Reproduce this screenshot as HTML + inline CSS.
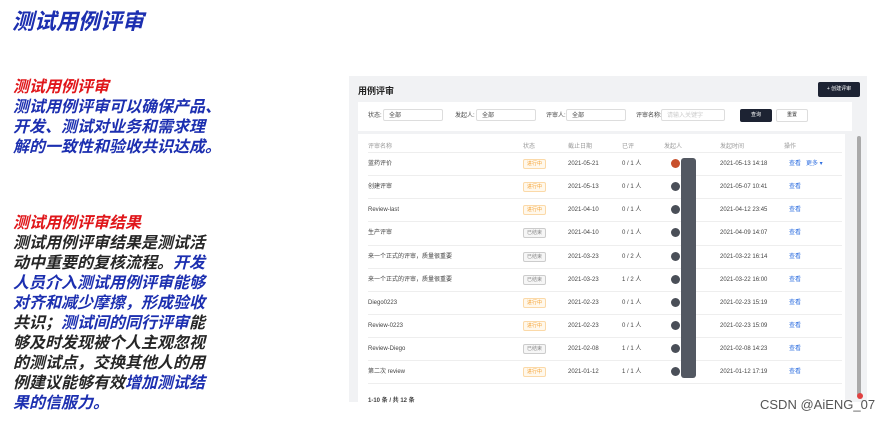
<!DOCTYPE html>
<html><head><meta charset="utf-8"><style>
*{margin:0;padding:0;box-sizing:border-box}
body{width:891px;height:422px;background:#fff;position:relative;overflow:hidden;font-family:"Liberation Sans","Noto Sans CJK SC",sans-serif}
.a{position:absolute;white-space:nowrap}
.t{font-weight:bold;font-style:italic;color:#1c2fb0;font-size:16px;line-height:20px}
.r{color:#e0161a}
.k{color:#262626}
.s{font-size:6px;color:#444;line-height:8px}
.g{font-size:6px;color:#999;line-height:8px}
.tag{position:absolute;font-size:5px;line-height:6px;padding:1px 3px;border:1px solid;border-radius:2px}
.o{color:#f5a030;border-color:#fbd9a8;background:#fff8ec}
.e{color:#888;border-color:#ccc;background:#f6f6f6}
.av{position:absolute;width:9px;height:9px;border-radius:50%;background:#4a4f58}
.l{position:absolute;left:368px;width:474px;height:1px;background:#eeeeee}
.b{font-size:6px;color:#2f6fe0;line-height:8px}
.sel{position:absolute;height:12px;border:1px solid #ddd;background:#fff;border-radius:2px}
</style></head><body>
<div class="a t" style="left:12px;top:8px;font-size:22px;line-height:28px">测试用例评审</div>
<div class="a t r" style="left:13px;top:78px">测试用例评审</div>
<div class="a t" style="left:13px;top:98px">测试用例评审可以确保产品、</div>
<div class="a t" style="left:13px;top:118px">开发、测试对业务和需求理</div>
<div class="a t" style="left:13px;top:138px">解的一致性和验收共识达成。</div>
<div class="a t r" style="left:13px;top:214px">测试用例评审结果</div>
<div class="a t k" style="left:13px;top:234px">测试用例评审结果是测试活</div>
<div class="a t" style="left:13px;top:254px"><span class="k">动中重要的复核流程。</span>开发</div>
<div class="a t" style="left:13px;top:274px">人员介入测试用例评审能够</div>
<div class="a t" style="left:13px;top:294px">对齐和减少摩擦，形成验收</div>
<div class="a t" style="left:13px;top:314px"><span class="k">共识；</span>测试间的同行评审<span class="k">能</span></div>
<div class="a t k" style="left:13px;top:334px">够及时发现被个人主观忽视</div>
<div class="a t k" style="left:13px;top:354px">的测试点，交换其他人的用</div>
<div class="a t" style="left:13px;top:374px"><span class="k">例建议能够有效</span>增加测试结</div>
<div class="a t" style="left:13px;top:394px">果的信服力。</div>

<div class="a" style="left:349px;top:76px;width:518px;height:326px;background:#f1f2f4"></div>
<div class="a" style="left:358px;top:84px;font-size:9px;font-weight:bold;color:#222">用例评审</div>
<div class="a" style="left:818px;top:82px;width:42px;height:15px;background:#1d2333;border-radius:2px;color:#fff;font-size:5px;line-height:15px;text-align:center">+ 创建评审</div>
<div class="a" style="left:358px;top:102px;width:494px;height:29px;background:#fff"></div>
<div class="a s" style="left:368px;top:112px">状态:</div><div class="sel" style="left:383px;top:109px;width:60px"></div><div class="a s" style="left:389px;top:112px">全部</div>
<div class="a s" style="left:455px;top:112px">发起人:</div><div class="sel" style="left:476px;top:109px;width:60px"></div><div class="a s" style="left:482px;top:112px">全部</div>
<div class="a s" style="left:546px;top:112px">评审人:</div><div class="sel" style="left:566px;top:109px;width:60px"></div><div class="a s" style="left:572px;top:112px">全部</div>
<div class="a s" style="left:636px;top:112px">评审名称:</div><div class="sel" style="left:661px;top:109px;width:64px"></div><div class="a g" style="left:667px;top:112px;color:#ccc">请输入关键字</div>
<div class="a" style="left:740px;top:109px;width:32px;height:13px;background:#1d2333;border-radius:2px;color:#fff;font-size:5px;line-height:13px;text-align:center">查询</div>
<div class="a" style="left:776px;top:109px;width:32px;height:13px;border:1px solid #ddd;background:#fff;border-radius:2px;font-size:5px;line-height:11px;text-align:center;color:#333">重置</div>
<div class="a" style="left:358px;top:134px;width:487px;height:268px;background:#fff"></div>
<div class="a" style="left:857px;top:136px;width:4px;height:260px;background:#aaa;border-radius:2px"></div>
<div class="a" style="left:857px;top:393px;width:6px;height:6px;background:#e04040;border-radius:50%"></div>
<div class="a g" style="left:368px;top:143px">评审名称</div><div class="a g" style="left:523px;top:143px">状态</div><div class="a g" style="left:568px;top:143px">截止日期</div><div class="a g" style="left:622px;top:143px">已评</div><div class="a g" style="left:664px;top:143px">发起人</div><div class="a g" style="left:720px;top:143px">发起时间</div><div class="a g" style="left:784px;top:143px">操作</div>

<div class="l" style="top:152px"></div>
<div class="a s" style="left:368px;top:160px">蓝药评价</div><div class="tag o" style="left:523px;top:159px">进行中</div><div class="a s" style="left:568px;top:160px">2021-05-21</div><div class="a s" style="left:622px;top:160px">0 / 1 人</div><div class="av" style="left:671px;top:159px;background:#c8502c"></div><div class="a s" style="left:720px;top:160px">2021-05-13 14:18</div><div class="a b" style="left:789px;top:160px">查看</div><div class="a b" style="left:806px;top:160px">更多 ▾</div>
<div class="l" style="top:175px"></div>
<div class="a s" style="left:368px;top:183px">创建评审</div><div class="tag o" style="left:523px;top:182px">进行中</div><div class="a s" style="left:568px;top:183px">2021-05-13</div><div class="a s" style="left:622px;top:183px">0 / 1 人</div><div class="av" style="left:671px;top:182px"></div><div class="a s" style="left:720px;top:183px">2021-05-07 10:41</div><div class="a b" style="left:789px;top:183px">查看</div>
<div class="l" style="top:198px"></div>
<div class="a s" style="left:368px;top:206px">Review-last</div><div class="tag o" style="left:523px;top:205px">进行中</div><div class="a s" style="left:568px;top:206px">2021-04-10</div><div class="a s" style="left:622px;top:206px">0 / 1 人</div><div class="av" style="left:671px;top:205px"></div><div class="a s" style="left:720px;top:206px">2021-04-12 23:45</div><div class="a b" style="left:789px;top:206px">查看</div>
<div class="l" style="top:221px"></div>
<div class="a s" style="left:368px;top:229px">生产评审</div><div class="tag e" style="left:523px;top:228px">已结束</div><div class="a s" style="left:568px;top:229px">2021-04-10</div><div class="a s" style="left:622px;top:229px">0 / 1 人</div><div class="av" style="left:671px;top:228px"></div><div class="a s" style="left:720px;top:229px">2021-04-09 14:07</div><div class="a b" style="left:789px;top:229px">查看</div>
<div class="l" style="top:245px"></div>
<div class="a s" style="left:368px;top:253px">来一个正式的评审，质量很重要</div><div class="tag e" style="left:523px;top:252px">已结束</div><div class="a s" style="left:568px;top:253px">2021-03-23</div><div class="a s" style="left:622px;top:253px">0 / 2 人</div><div class="av" style="left:671px;top:252px"></div><div class="a s" style="left:720px;top:253px">2021-03-22 16:14</div><div class="a b" style="left:789px;top:253px">查看</div>
<div class="l" style="top:268px"></div>
<div class="a s" style="left:368px;top:276px">来一个正式的评审，质量很重要</div><div class="tag e" style="left:523px;top:275px">已结束</div><div class="a s" style="left:568px;top:276px">2021-03-23</div><div class="a s" style="left:622px;top:276px">1 / 2 人</div><div class="av" style="left:671px;top:275px"></div><div class="a s" style="left:720px;top:276px">2021-03-22 16:00</div><div class="a b" style="left:789px;top:276px">查看</div>
<div class="l" style="top:291px"></div>
<div class="a s" style="left:368px;top:299px">Diego0223</div><div class="tag o" style="left:523px;top:298px">进行中</div><div class="a s" style="left:568px;top:299px">2021-02-23</div><div class="a s" style="left:622px;top:299px">0 / 1 人</div><div class="av" style="left:671px;top:298px"></div><div class="a s" style="left:720px;top:299px">2021-02-23 15:19</div><div class="a b" style="left:789px;top:299px">查看</div>
<div class="l" style="top:314px"></div>
<div class="a s" style="left:368px;top:322px">Review-0223</div><div class="tag o" style="left:523px;top:321px">进行中</div><div class="a s" style="left:568px;top:322px">2021-02-23</div><div class="a s" style="left:622px;top:322px">0 / 1 人</div><div class="av" style="left:671px;top:321px"></div><div class="a s" style="left:720px;top:322px">2021-02-23 15:09</div><div class="a b" style="left:789px;top:322px">查看</div>
<div class="l" style="top:337px"></div>
<div class="a s" style="left:368px;top:345px">Review-Diego</div><div class="tag e" style="left:523px;top:344px">已结束</div><div class="a s" style="left:568px;top:345px">2021-02-08</div><div class="a s" style="left:622px;top:345px">1 / 1 人</div><div class="av" style="left:671px;top:344px"></div><div class="a s" style="left:720px;top:345px">2021-02-08 14:23</div><div class="a b" style="left:789px;top:345px">查看</div>
<div class="l" style="top:360px"></div>
<div class="a s" style="left:368px;top:368px">第二次 review</div><div class="tag o" style="left:523px;top:367px">进行中</div><div class="a s" style="left:568px;top:368px">2021-01-12</div><div class="a s" style="left:622px;top:368px">1 / 1 人</div><div class="av" style="left:671px;top:367px"></div><div class="a s" style="left:720px;top:368px">2021-01-12 17:19</div><div class="a b" style="left:789px;top:368px">查看</div>
<div class="l" style="top:383px"></div>
<div class="a" style="left:681px;top:158px;width:15px;height:220px;background:#535862;border-radius:3px"></div>
<div class="a s" style="left:368px;top:397px;font-weight:bold">1-10 条 / 共 12 条</div>
<div class="a" style="left:760px;top:397px;font-size:13px;color:#555;text-shadow:0 0 2px #fff">CSDN @AiENG_07</div>
</body></html>
